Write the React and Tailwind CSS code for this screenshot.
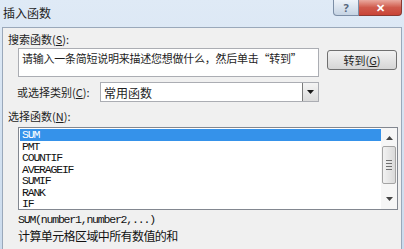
const functions = ['SUM', 'PMT', 'COUNTIF', 'AVERAGEIF', 'SUMIF', 'RANK', 'IF'];

const cjk = "font-['Noto_Sans_CJK_SC',sans-serif]";
const mono = "font-['Liberation_Mono',monospace]";

const App = () => {
  return (
    <div className="flex h-[249px] w-[404px] flex-col overflow-hidden bg-gradient-to-b from-[#dfeaf6] to-[#cbdbed]">
      {/* Title bar */}
      <div className="flex h-[27px] shrink-0 items-start">
        <span className={`${cjk} pl-[3px] pt-[6px] text-[12px] leading-[14px] text-[#1e1e1e]`}>插入函数</span>
        <div className="ml-auto mr-[2px] flex">
          <div className="flex h-[16px] w-[26px] items-center justify-center rounded-bl-[4px] border border-t-0 border-[#7c8ea6] bg-gradient-to-b from-[#eef3f9] to-[#c5d3e3] text-[11px] font-bold leading-none text-[#55657a]">
            ?
          </div>
          <div className="flex h-[16px] w-[43px] items-center justify-center rounded-br-[4px] border border-l-0 border-t-0 border-[#8a3a32] bg-gradient-to-b from-[#e9a99f] via-[#cf5a4c] to-[#c94437] text-[11px] font-bold leading-none text-white">
            ✕
          </div>
        </div>
      </div>

      {/* Body */}
      <div className={`${cjk} mx-[2px] flex flex-1 flex-col border border-b-0 border-[#9aa8ba] bg-[#f0f0f0] pl-[5px] text-[11px] text-[#1e1e1e]`}>
        <div className="mt-[5px] leading-[13px]">搜索函数(<span className="underline">S</span>):</div>

        <div className="mt-[2px] flex items-start">
          <div className="ml-[10px] h-[29px] w-[301px] border border-[#abadb3] bg-white pl-[3px] pt-[3px] leading-[13px] tracking-[-0.25px]">
            请输入一条简短说明来描述您想做什么，然后单击“转到”
          </div>
          <div className="ml-[8px] mt-[2px] flex h-[20px] w-[70px] items-center justify-center rounded-[3px] border border-[#707070] bg-gradient-to-b from-[#f2f2f2] to-[#d6d6d6] leading-none">
            转到(<span className="underline">G</span>)
          </div>
        </div>

        <div className="mt-[5px] flex h-[20px] items-center">
          <span className="ml-[9px] w-[83px] leading-[13px]">或选择类别(<span className="underline">C</span>):</span>
          <div className="flex h-[20px] w-[219px] items-center border border-[#abadb3] bg-white">
            <span className="flex-1 pl-[3px] text-[12px] leading-[13px]">常用函数</span>
            <div className="flex h-[18px] w-[16px] items-center justify-center border-l border-[#7a7a7a] bg-gradient-to-b from-[#f4f4f4] to-[#dcdcdc]">
              <svg width="7" height="4" viewBox="0 0 7 4">
                <path d="M0 0h7L3.5 4z" fill="#1a1a1a" />
              </svg>
            </div>
          </div>
        </div>

        <div className="mt-[8px] leading-[13px]">选择函数(<span className="underline">N</span>):</div>

        {/* Function list */}
        <div className="ml-[10px] mt-[4px] flex h-[83px] w-[380px] border border-[#828790] bg-white">
          <div className={`${mono} flex-1 pt-[1px] pl-[1px] text-[11.5px] tracking-[-1.2px] text-[#111]`}>
            {functions.map((fn, i) => (
              <div
                key={fn}
                className={
                  i === 0
                    ? 'h-[11.5px] bg-[#3592ea] pl-[2px] leading-[11.5px] text-white'
                    : 'h-[11.5px] pl-[2px] leading-[11.5px]'
                }
              >
                {fn}
              </div>
            ))}
          </div>
          <div className="flex w-[16px] flex-col items-center bg-[#f6f6f6]">
            <svg className="mt-[8px]" width="7" height="4" viewBox="0 0 7 4">
              <path d="M3.5 0L7 4H0z" fill="#444" />
            </svg>
            <div className="mt-[6px] flex h-[38px] w-[14px] flex-col items-center justify-center gap-[2px] rounded-[2px] border border-[#a4a4a4] bg-gradient-to-r from-[#f2f2f2] to-[#dadada]">
              <div className="h-px w-[6px] bg-[#707070]" />
              <div className="h-px w-[6px] bg-[#707070]" />
              <div className="h-px w-[6px] bg-[#707070]" />
              <div className="h-px w-[6px] bg-[#707070]" />
            </div>
            <svg className="mt-auto mb-[8px]" width="7" height="4" viewBox="0 0 7 4">
              <path d="M0 0h7L3.5 4z" fill="#444" />
            </svg>
          </div>
        </div>

        <div className={`${mono} ml-[10px] mt-[4px] text-[11.5px] leading-[12px] tracking-[-1.2px] text-[#111]`}>
          SUM(number1,number2,...)
        </div>
        <div className="ml-[10px] mt-[3px] text-[12px] leading-[14px] tracking-[-0.6px] text-[#111]">计算单元格区域中所有数值的和</div>
      </div>
    </div>
  );
};

export default App;
